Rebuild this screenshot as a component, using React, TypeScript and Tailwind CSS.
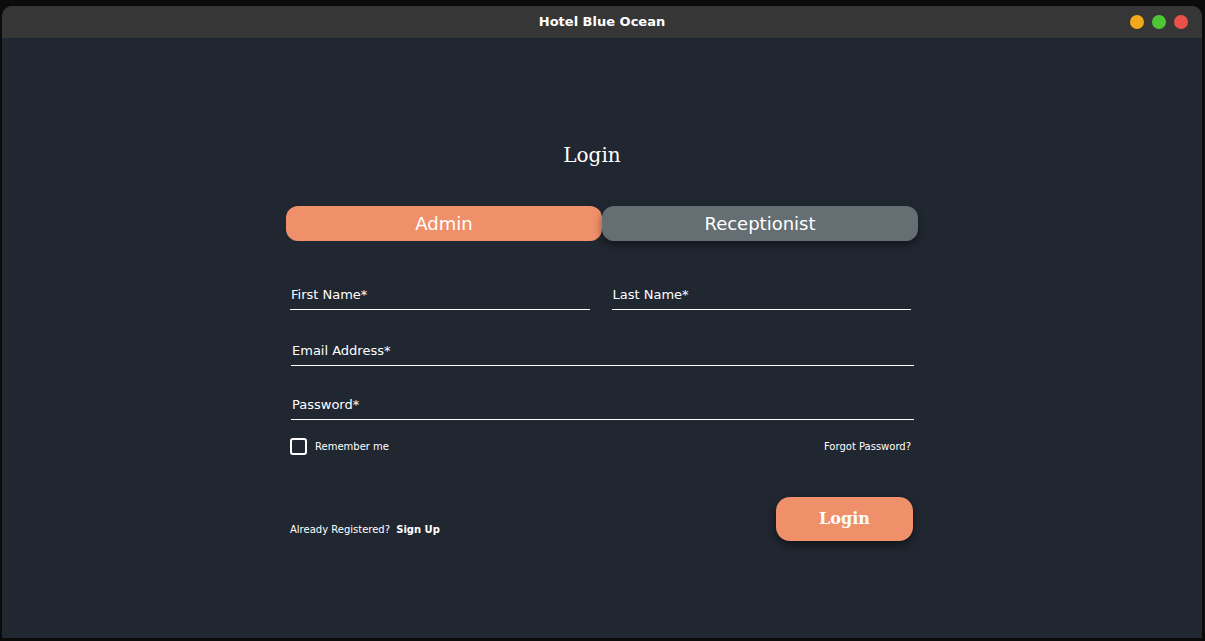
export default function App() {
  return (
    <div className="w-[1205px] h-[641px] bg-[#0b0b0b] pt-[6px] pl-[2px] pr-[3px] pb-[3px] font-['DejaVu_Sans',sans-serif]">
      <div className="h-full flex flex-col rounded-t-[10px] overflow-hidden bg-[#212731]">
        {/* title bar */}
        <div className="h-[32px] bg-[#363636] relative flex items-center justify-center shrink-0">
          <span className="text-[13px] font-bold text-white">Hotel Blue Ocean</span>
          <div className="absolute right-[14px] top-[9px] flex gap-[8px]">
            <span className="w-[14px] h-[14px] rounded-full bg-[#f2a91d]" />
            <span className="w-[14px] h-[14px] rounded-full bg-[#4fc734]" />
            <span className="w-[14px] h-[14px] rounded-full bg-[#ea5149]" />
          </div>
        </div>

        <div className="flex-1 flex flex-col items-center">
          <div className="w-[632px] flex flex-col">
            <h1 className="mt-[102px] pr-[20px] text-center text-white text-[20px] font-['DejaVu_Serif',serif]">Login</h1>

            <div className="mt-[36px] flex">
              <button className="flex-1 h-[35px] rounded-[12px] bg-[#f0906a] text-white text-[18px]">Admin</button>
              <button className="flex-1 h-[35px] rounded-[12px] bg-[#646e73] text-white text-[18px] shadow-[0_4px_8px_rgba(0,0,0,0.45)]">
                Receptionist
              </button>
            </div>

            <div className="mt-[46px] pl-[4px] pr-[7px] flex gap-[22px]">
              <Field label="First Name*" />
              <Field label="Last Name*" />
            </div>
            <div className="mt-[33px] pl-[5px] pr-[4px]">
              <Field label="Email Address*" />
            </div>
            <div className="mt-[31px] pl-[5px] pr-[4px]">
              <Field label="Password*" />
            </div>

            <div className="mt-[18px] px-[4px] flex items-center justify-between">
              <label className="flex items-center gap-[8px]">
                <span className="w-[17px] h-[17px] border-2 border-white rounded-[3px]" />
                <span className="text-[10px] text-white">Remember me</span>
              </label>
              <span className="text-[10px] text-white pr-[3px]">Forgot Password?</span>
            </div>

            <div className="mt-[42px] pl-[4px] pr-[5px] flex items-center justify-between">
              <p className="text-[10px] text-white mt-[20px]">
                Already Registered? <span className="font-bold ml-[3px]">Sign Up</span>
              </p>
              <button className="w-[137px] h-[44px] rounded-[14px] bg-[#f0906a] text-white text-[16px] font-bold font-['DejaVu_Serif',serif] shadow-[0_4px_10px_rgba(0,0,0,0.5)]">
                Login
              </button>
            </div>
          </div>
        </div>
      </div>
    </div>
  );
}

function Field({ label }: { label: string }) {
  return (
    <div className="flex-1 border-b border-white pb-[6px]">
      <span className="block pl-[1px] text-[13px] text-white leading-[16px]">{label}</span>
    </div>
  );
}
